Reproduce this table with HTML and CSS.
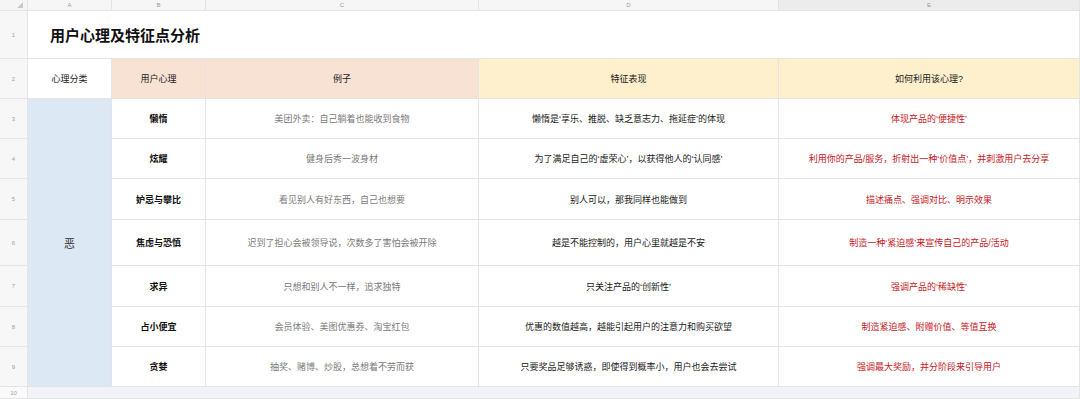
FILE: index.html
```html
<!DOCTYPE html>
<html lang="zh">
<head>
<meta charset="utf-8">
<link rel="stylesheet" href="styles.css">
</head>
<body>
<div class="sheet">
  <div class="corner"><span class="tri"></span></div>
  <div class="colh">A</div>
  <div class="colh">B</div>
  <div class="colh">C</div>
  <div class="colh">D</div>
  <div class="colh sel">E</div>

  <div class="rowh">1</div>
  <div class="title">用户心理及特征点分析</div>

  <div class="rowh">2</div>
  <div class="cell hd">心理分类</div>
  <div class="cell hd peach">用户心理</div>
  <div class="cell hd peach">例子</div>
  <div class="cell hd yellow">特征表现</div>
  <div class="cell hd yellow">如何利用该心理?</div>

  <div class="rowh">3</div>
  <div class="cell cat">恶</div>
  <div class="cell b">懒惰</div>
  <div class="cell c">美团外卖：自己躺着也能收到食物</div>
  <div class="cell d">懒惰是‘享乐、推脱、缺乏意志力、拖延症’的体现</div>
  <div class="cell e">体现产品的‘便捷性’</div>

  <div class="rowh">4</div>
  <div class="cell b">炫耀</div>
  <div class="cell c">健身后秀一波身材</div>
  <div class="cell d">为了满足自己的‘虚荣心’，以获得他人的‘认同感’</div>
  <div class="cell e">利用你的产品/服务，折射出一种‘价值点’，并刺激用户去分享</div>

  <div class="rowh">5</div>
  <div class="cell b">妒忌与攀比</div>
  <div class="cell c">看见别人有好东西，自己也想要</div>
  <div class="cell d">别人可以，那我同样也能做到</div>
  <div class="cell e">描述痛点、强调对比、明示效果</div>

  <div class="rowh">6</div>
  <div class="cell b">焦虑与恐慎</div>
  <div class="cell c">迟到了担心会被领导说，次数多了害怕会被开除</div>
  <div class="cell d">越是不能控制的，用户心里就越是不安</div>
  <div class="cell e">制造一种‘紧迫感’来宣传自己的产品/活动</div>

  <div class="rowh">7</div>
  <div class="cell b">求异</div>
  <div class="cell c">只想和别人不一样，追求独特</div>
  <div class="cell d">只关注产品的‘创新性’</div>
  <div class="cell e">强调产品的‘稀缺性’</div>

  <div class="rowh">8</div>
  <div class="cell b">占小便宜</div>
  <div class="cell c">会员体验、美图优惠券、淘宝红包</div>
  <div class="cell d">优惠的数值越高，越能引起用户的注意力和购买欲望</div>
  <div class="cell e">制造紧迫感、附赠价值、等值互换</div>

  <div class="rowh">9</div>
  <div class="cell b">贪婪</div>
  <div class="cell c">抽奖、赌博、炒股，总想着不劳而获</div>
  <div class="cell d">只要奖品足够诱惑，即使得到概率小，用户也会去尝试</div>
  <div class="cell e">强调最大奖励，并分阶段来引导用户</div>

  <div class="rowh last">10</div>
  <div class="blank"></div>
</div>
</body>
</html>
```

FILE: styles.css
```css
html, body {
  margin: 0;
  padding: 0;
  background: #ffffff;
}

body {
  font-family: "Liberation Sans", "Noto Sans CJK SC", sans-serif;
  color: #222;
}

.sheet {
  width: 1080px;
  height: 399px;
  overflow: hidden;
  display: grid;
  grid-template-columns: 28px 84px 94px 273px 300px 301px;
  grid-template-rows: 11px 48px 40px 40px 40px 41px 46px 41px 40px 40px 12px;
}

.sheet > div {
  box-sizing: border-box;
  border-right: 1px solid #e4e4e4;
  border-bottom: 1px solid #e4e4e4;
  display: flex;
  align-items: center;
  justify-content: center;
}

.corner {
  background: #f5f5f5;
  justify-content: flex-end !important;
  align-items: flex-end !important;
  padding: 0 4px 2px 0;
}

.tri {
  width: 0;
  height: 0;
  border-left: 6px solid transparent;
  border-bottom: 6px solid #c9c9c9;
}

.colh {
  background: #f6f6f6;
  color: #9a9a9a;
  font-size: 6px;
}

.colh.sel {
  background: #ececec;
}

.rowh {
  background: #f7f7f7;
  color: #a0a0a0;
  font-size: 6px;
}

.rowh.last {
  background: #fafafa;
}

.title {
  grid-column: 2 / 7;
  justify-content: flex-start !important;
  padding-left: 22px;
  font-size: 15px;
  font-weight: 700;
  color: #111;
  background: #fff;
}

.cell {
  font-size: 9px;
  white-space: nowrap;
}

.hd {
  color: #222;
}

.peach {
  background: #f8e2d3;
}

.yellow {
  background: #fef0cd;
}

.cat {
  grid-row: 4 / 11;
  grid-column: 2;
  background: #dde8f5;
  font-size: 11px;
  color: #333;
}

.b {
  font-weight: 700;
  color: #111;
}

.c {
  color: #7a7a7a;
}

.d {
  color: #1a1a1a;
}

.e {
  color: #c8161d;
}

.blank {
  grid-column: 2 / 7;
  background: #f1f3f6;
}
```
